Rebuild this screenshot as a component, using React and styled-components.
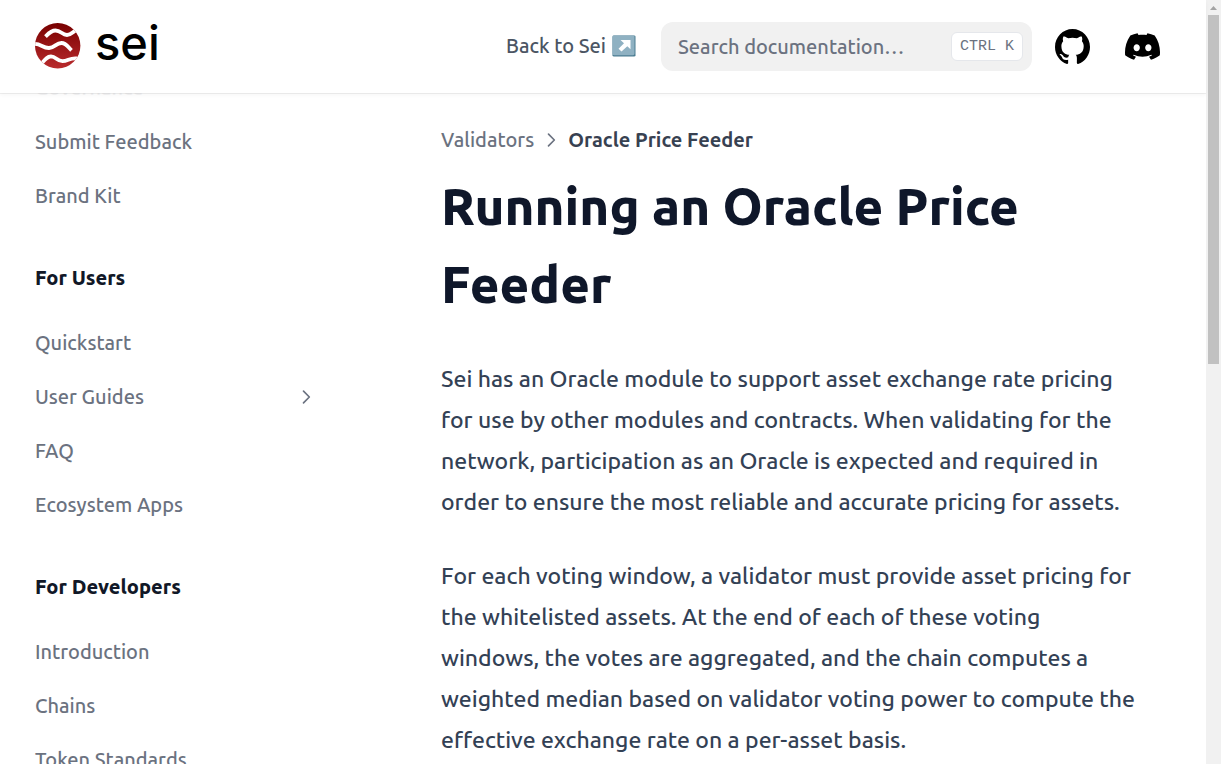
import React from "react";
import styled, { createGlobalStyle } from "styled-components";

const GlobalStyle = createGlobalStyle`
  * { box-sizing: border-box; }
  body {
    margin: 0;
    background: #fff;
    overflow: hidden;
    font-family: Ubuntu, "Noto Sans", "Open Sans", sans-serif;
    font-size: 20px;
    font-weight: 500;
    line-height: 30px;
    color: #6b7280;
  }
  a { color: inherit; text-decoration: none; }
`;

const Window = styled.div`
  display: flex;
  height: 100vh;
`;

const Site = styled.div`
  flex: 1;
  min-width: 0;
  display: flex;
  flex-direction: column;
`;

const Header = styled.header`
  z-index: 1;
  flex: none;
  display: flex;
  align-items: center;
  height: 93px;
  padding: 0 46px 0 35px;
  background: #fff;
  box-shadow: 0 2px 4px rgba(0, 0, 0, 0.04), 0 1px 0 rgba(0, 0, 0, 0.06);
`;

const Logo = styled.a`
  display: flex;
  align-items: center;
  gap: 14px;
  margin-right: auto;
  padding-bottom: 2px;
  color: #000;
`;

const Wordmark = styled.span`
  padding-bottom: 6px;
  font: 500 47px/50px Inter, sans-serif;
`;

const BackLink = styled.a`
  display: flex;
  align-items: center;
  gap: 6px;
  margin-right: 25px;
  padding-bottom: 2px;
  color: #4b5563;
  white-space: nowrap;
`;

const Search = styled.label`
  display: flex;
  align-items: center;
  flex: 0 1 371px;
  min-width: 0;
  height: 49px;
  margin-right: 23px;
  padding: 0 9px 0 17px;
  border-radius: 12px;
  background: #f1f1f1;
`;

const SearchInput = styled.input`
  flex: 1;
  min-width: 0;
  padding: 0;
  border: 0;
  outline: 0;
  background: none;
  font: inherit;
  color: #374151;
  &::placeholder { color: #6b7280; opacity: 1; }
`;

const Shortcut = styled.kbd`
  padding: 0 8px;
  border: 1px solid #e5e7eb;
  border-radius: 6px;
  background: #fff;
  color: #6b7280;
  font: 400 15px/27px "Liberation Mono", monospace;
  white-space: pre;
`;

const IconLink = styled.a`
  display: flex;
  color: #000;
  & + & { margin-left: 35px; }
`;

const Columns = styled.div`
  flex: 1;
  min-height: 0;
  display: flex;
  overflow: hidden;
`;

const Sidebar = styled.nav`
  flex: 0 0 371px;
  padding: 0 55px 0 35px;
`;

const Group = styled.ul`
  list-style: none;
  margin: 0;
  padding: 0;
  &:first-child { margin-top: -32px; }
`;

const Item = styled.li`
  a {
    display: flex;
    align-items: center;
    justify-content: space-between;
    height: 54px;
    color: ${(p) => (p.$faded ? "#f3f3f4" : "#6b7280")};
  }
`;

const GroupTitle = styled.h2`
  margin: 40px 0 23px;
  color: #111827;
  font-size: 20px;
  line-height: 30px;
  font-weight: 800;
`;

const Article = styled.main`
  flex: 1;
  min-width: 0;
  padding: 32px 70px 0 70px;
  color: #334155;
`;

const Breadcrumb = styled.nav`
  display: flex;
  align-items: center;
  gap: 7px;
  color: #6b7280;
  strong { color: #374151; font-weight: 600; }
`;

const Title = styled.h1`
  margin: 12px 0 0;
  color: #0f172a;
  font-size: 51px;
  line-height: 78px;
  font-weight: 800;
`;

const Paragraph = styled.p`
  margin: 33px 0 0;
  font-size: 23px;
  line-height: 41px;
  ${Title} + & { margin-top: 35px; }
`;

const Scrollbar = styled.div`
  flex: none;
  display: flex;
  flex-direction: column;
  width: 15px;
  padding: 5px 2px 0;
  background: #f1f1f1;
  svg { display: block; align-self: center; }
`;

const Thumb = styled.div`
  height: calc(46vh - 2px);
  margin-top: 5px;
  background: #c1c1c1;
`;

const LogoMark = () => (
  <svg width="46" height="46" viewBox="0 0 46 46" aria-hidden="true">
    <defs>
      <linearGradient id="mark" x1="0" y1="0" x2="0" y2="1">
        <stop offset="0" stopColor="#780000" />
        <stop offset="1" stopColor="#b92b2d" />
      </linearGradient>
      <clipPath id="disc"><circle cx="22.700" cy="22.700" r="22.700" /></clipPath>
    </defs>
    <circle cx="22.700" cy="22.700" r="22.700" fill="url(#mark)" />
    <g fill="none" stroke="#fff" strokeWidth="3.800" clipPath="url(#disc)">
      <path d="M10.5 13.6 C13.500 10.500 16 7.500 20.500 7.500 C26 7.500 27 12 32 12 C36 12 38 8.500 42 6.6" />
      <path d="M-1 21 C6 20.4 7.500 25.2 14 25 C20 24.600 21 20 26.500 20 C31 20 33 24 36.500 27.400" />
      <path d="M6.500 40.600 C10 36.500 12 33.600 16 33.400 C21 33.400 22 38.200 27.500 38.200 C33 38.200 35 34.500 42 35.500" />
    </g>
  </svg>
);

const ArrowBadge = () => (
  <svg width="24" height="22" viewBox="0 0 24 24" preserveAspectRatio="none" aria-hidden="true">
    <rect x="0.500" y="0.500" width="23" height="23" rx="1.500" fill="#4b7d92" />
    <rect x="0.500" y="0.500" width="22" height="21.500" rx="1.500" fill="#8fb1c2" />
    <path d="M8.500 5.500h10v10l-3.200-3.200-5.800 5.800-3-3 5.500-6.100z" fill="#fff" />
  </svg>
);

const GithubIcon = () => (
  <svg width="35" height="35" viewBox="3 3 18 18" fill="currentColor" aria-hidden="true">
    <path d="M12 3C7.0275 3 3 7.12937 3 12.2276C3 16.3109 5.57625 19.7597 9.15374 20.9824C9.60374 21.0631 9.77249 20.7863 9.77249 20.5441C9.77249 20.3249 9.76125 19.5982 9.76125 18.8254C7.5 19.2522 6.915 18.2602 6.735 17.7412C6.63375 17.4759 6.19499 16.6569 5.8125 16.4378C5.4975 16.2647 5.0475 15.838 5.80124 15.8264C6.51 15.8149 7.01625 16.4954 7.18499 16.7723C7.99499 18.1679 9.28875 17.7758 9.80625 17.5335C9.885 16.9337 10.1212 16.53 10.38 16.2993C8.3775 16.0687 6.285 15.2728 6.285 11.7432C6.285 10.7397 6.63375 9.9092 7.20749 9.26326C7.1175 9.03257 6.8025 8.08674 7.2975 6.81794C7.2975 6.81794 8.05125 6.57571 9.77249 7.76377C10.4925 7.55615 11.2575 7.45234 12.0225 7.45234C12.7875 7.45234 13.5525 7.55615 14.2725 7.76377C15.9937 6.56418 16.7475 6.81794 16.7475 6.81794C17.2424 8.08674 16.9275 9.03257 16.8375 9.26326C17.4113 9.9092 17.76 10.7281 17.76 11.7432C17.76 15.2843 15.6563 16.0687 13.6537 16.2993C13.98 16.5877 14.2613 17.1414 14.2613 18.0065C14.2613 19.2407 14.25 20.2326 14.25 20.5441C14.25 20.7863 14.4188 21.0746 14.8688 20.9824C16.6554 20.364 18.2079 19.1866 19.3078 17.6162C20.4077 16.0457 20.9995 14.1611 21 12.2276C21 7.12937 16.9725 3 12 3Z" />
  </svg>
);

const DiscordIcon = () => (
  <svg width="35" height="35" viewBox="0 1.300 30.67 30.67" fill="currentColor" aria-hidden="true">
    <path d="M26.0015 6.9529C24.0021 6.03845 21.8787 5.37198 19.6623 5C19.3833 5.48048 19.0733 6.13144 18.8563 6.64292C16.4989 6.30193 14.1585 6.30193 11.8336 6.64292C11.6166 6.13144 11.2911 5.48048 11.0276 5C8.79575 5.37198 6.67235 6.03845 4.6869 6.9529C0.672601 12.8736 -0.41235 18.6548 0.130124 24.3585C2.79599 26.2959 5.36889 27.4739 7.89682 28.2489C8.51679 27.4119 9.07477 26.5129 9.55525 25.5675C8.64079 25.2265 7.77283 24.808 6.93587 24.312C7.15286 24.1571 7.36986 23.9866 7.57135 23.8161C12.6241 26.1255 18.0969 26.1255 23.0876 23.8161C23.3046 23.9866 23.5061 24.1571 23.7231 24.312C22.8861 24.808 22.0182 25.2265 21.1037 25.5675C21.5842 26.5129 22.1422 27.4119 22.7621 28.2489C25.2885 27.4739 27.8769 26.2959 30.5288 24.3585C31.1952 17.7559 29.4733 12.0212 26.0015 6.9529ZM10.2527 20.8402C8.73376 20.8402 7.49382 19.4608 7.49382 17.7714C7.49382 16.082 8.70276 14.7025 10.2527 14.7025C11.7871 14.7025 13.0425 16.082 13.0115 17.7714C13.0115 19.4608 11.7871 20.8402 10.2527 20.8402ZM20.4373 20.8402C18.9183 20.8402 17.6768 19.4608 17.6768 17.7714C17.6768 16.082 18.8873 14.7025 20.4373 14.7025C21.9717 14.7025 23.2271 16.082 23.1961 17.7714C23.1961 19.4608 21.9872 20.8402 20.4373 20.8402Z" />
  </svg>
);

const Chevron = ({ size = 20, weight = 2 }) => (
  <svg width={size} height={size} viewBox="0 0 24 24" fill="none" stroke="currentColor" strokeWidth={weight} strokeLinecap="round" strokeLinejoin="round" aria-hidden="true">
    <path d="M9 5l7 7-7 7" />
  </svg>
);

const groups = [
  { items: ["Governance", "Submit Feedback", "Brand Kit"] },
  { title: "For Users", items: ["Quickstart", "User Guides", "FAQ", "Ecosystem Apps"] },
  { title: "For Developers", items: ["Introduction", "Chains", "Token Standards"] },
];

export default function App() {
  return (
    <Window>
      <GlobalStyle />
      <Site>
        <Header>
          <Logo href="#"><LogoMark /><Wordmark>sei</Wordmark></Logo>
          <BackLink href="#">Back to Sei <ArrowBadge /></BackLink>
          <Search>
            <SearchInput type="search" aria-label="Search documentation" placeholder="Search documentation…" />
            <Shortcut>CTRL K</Shortcut>
          </Search>
          <IconLink href="#" aria-label="GitHub"><GithubIcon /></IconLink>
          <IconLink href="#" aria-label="Discord"><DiscordIcon /></IconLink>
        </Header>
        <Columns>
          <Sidebar>
            {groups.map((group, g) => (
              <React.Fragment key={g}>
                {group.title && <GroupTitle>{group.title}</GroupTitle>}
                <Group>
                  {group.items.map((name) => (
                    <Item key={name} $faded={name === "Governance"}>
                      <a href="#">{name}{name === "User Guides" && <Chevron />}</a>
                    </Item>
                  ))}
                </Group>
              </React.Fragment>
            ))}
          </Sidebar>
          <Article>
            <Breadcrumb>
              <a href="#">Validators</a>
              <Chevron />
              <strong>Oracle Price Feeder</strong>
            </Breadcrumb>
            <Title>Running an Oracle Price Feeder</Title>
            <Paragraph>
              Sei has an Oracle module to support asset exchange rate pricing for use by other
              modules and contracts. When validating for the network, participation as an Oracle is
              expected and required in order to ensure the most reliable and accurate pricing for
              assets.
            </Paragraph>
            <Paragraph>
              For each voting window, a validator must provide asset pricing for the whitelisted
              assets. At the end of each of these voting windows, the votes are aggregated, and the
              chain computes a weighted median based on validator voting power to compute the
              effective exchange rate on a per-asset basis.
            </Paragraph>
          </Article>
        </Columns>
      </Site>
      <Scrollbar aria-hidden="true">
        <svg width="7" height="5" viewBox="0 0 7 5"><path d="M0 5L3.500 1L7 5z" fill="#a3a3a3" /></svg>
        <Thumb />
      </Scrollbar>
    </Window>
  );
}
